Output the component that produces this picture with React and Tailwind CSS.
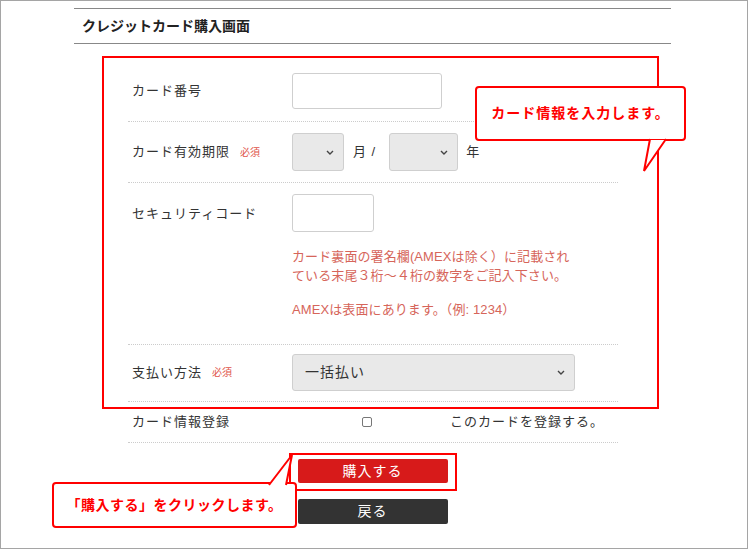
const font = { fontFamily: '"Liberation Sans", "Noto Sans CJK JP", sans-serif' };

function Chevron() {
  return (
    <svg width="8" height="5" viewBox="0 0 8 5" className="shrink-0">
      <polyline points="1,1 4,4 7,1" fill="none" stroke="#444" strokeWidth="1.4" />
    </svg>
  );
}

function SelectBox({ w, h = "h-[38px]", children }) {
  return (
    <div className={`${w} ${h} flex items-center justify-between bg-[#e9e9e9] border border-[#cfcfcf] rounded-[3px] pl-[12px] pr-[9px]`}>
      <span className="text-[14px] text-[#333]">{children}</span>
      <Chevron />
    </div>
  );
}

function Required() {
  return <span className="ml-[10px] text-[10px] text-[#e0554a] tracking-normal">必須</span>;
}

export default function App() {
  return (
    <div className="relative w-[748px] h-[549px] border border-[#a5a5a5] bg-white overflow-hidden" style={font}>
      <div className="ml-[73px] w-[597px] pt-[7px]">
        {/* heading */}
        <div className="h-[36px] border-t border-b border-[#888] flex items-center pl-[8px]">
          <h1 className="text-[14px] font-bold text-[#222]">クレジットカード購入画面</h1>
        </div>

        <div className="ml-[54px] w-[490px] mt-[17px] text-[13px] tracking-[1px] text-[#333]">
          {/* card number */}
          <div className="flex py-[12px] border-b border-dotted border-[#cccccc]">
            <div className="w-[164px] pl-[4px] h-[36px] flex items-center">カード番号</div>
            <div className="w-[150px] h-[36px] border border-[#cfcfcf] rounded-[3px] bg-white" />
          </div>

          {/* expiry */}
          <div className="flex py-[11px] border-b border-dotted border-[#cccccc]">
            <div className="w-[164px] pl-[4px] h-[38px] flex items-center">
              カード有効期限<Required />
            </div>
            <div className="flex items-center h-[38px]">
              <SelectBox w="w-[52px]" />
              <span className="ml-[9px] mr-[13px]">月 /</span>
              <SelectBox w="w-[69px]" />
              <span className="ml-[8px]">年</span>
            </div>
          </div>

          {/* security code */}
          <div className="flex pt-[11px] pb-[25px] border-b border-dotted border-[#cccccc]">
            <div className="w-[164px] pl-[4px] h-[38px] flex items-start pt-[10px]">セキュリティコード</div>
            <div className="flex flex-col">
              <div className="w-[82px] h-[38px] border border-[#cfcfcf] rounded-[3px] bg-white" />
              <p className="mt-[15px] leading-[19px] text-[#d6655a] tracking-[0.1px]">
                カード裏面の署名欄(AMEXは除く）に記載され<br />ている末尾３桁～４桁の数字をご記入下さい。
              </p>
              <p className="mt-[15px] leading-[19px] text-[#d6655a] tracking-[0.1px]">AMEXは表面にあります。（例: 1234）</p>
            </div>
          </div>

          {/* payment */}
          <div className="flex pt-[9px] pb-[10px] border-b border-dotted border-[#cccccc]">
            <div className="w-[164px] pl-[4px] h-[37px] flex items-center">
              支払い方法<Required />
            </div>
            <SelectBox w="w-[283px]" h="h-[37px]">一括払い</SelectBox>
          </div>

          {/* save card */}
          <div className="flex items-center h-[41px] border-b border-dotted border-[#cccccc]">
            <div className="w-[164px] pl-[4px]">カード情報登録</div>
            <div className="w-[150px] flex justify-center">
              <span className="w-[10px] h-[10px] border border-[#777] rounded-[2px] bg-white" />
            </div>
            <div className="ml-[8px]">このカードを登録する。</div>
          </div>
        </div>

        {/* buttons */}
        <div className="flex flex-col items-center gap-[16px] mt-[16px] text-[14px] tracking-[1px] text-white">
          <button className="w-[150px] h-[24px] bg-[#d71a1a] rounded-[2px] flex items-center justify-center">購入する</button>
          <button className="w-[150px] h-[25px] bg-[#333333] rounded-[2px] flex items-center justify-center">戻る</button>
        </div>
      </div>

      {/* annotation: form outline */}
      <div className="absolute left-[101px] top-[55px] w-[557px] h-[353px] border-2 border-[#ff0000]" />

      {/* annotation: callout 1 */}
      <div className="absolute left-[474px] top-[85px] w-[211px] h-[55px] bg-white border-2 border-[#ff0000] rounded-[4px] flex items-center justify-center">
        <span className="text-[14px] font-bold text-[#ff0000] tracking-[1px]">カード情報を入力します。</span>
      </div>
      <svg className="absolute left-[640px] top-[137px]" width="30" height="36" viewBox="0 0 30 36">
        <polygon points="9,2 25,2 3,33" fill="white" />
        <polyline points="9,1 3,33 25,1" fill="none" stroke="#ff0000" strokeWidth="2" />
      </svg>

      {/* annotation: buy button outline */}
      <div className="absolute left-[288px] top-[452px] w-[168px] h-[38px] border-2 border-[#ff0000]" />

      {/* annotation: callout 2 */}
      <div className="absolute left-[51px] top-[481px] w-[245px] h-[46px] bg-white border-2 border-[#ff0000] rounded-[4px] flex items-center justify-center">
        <span className="text-[14px] font-bold text-[#ff0000] tracking-[0.5px]">「購入する」をクリックします。</span>
      </div>
      <svg className="absolute left-[264px] top-[451px]" width="32" height="34" viewBox="0 0 32 34">
        <polygon points="4,32 21,32 27,3" fill="white" />
        <polyline points="4,33 27,3 21,33" fill="none" stroke="#ff0000" strokeWidth="2" />
      </svg>
    </div>
  );
}
